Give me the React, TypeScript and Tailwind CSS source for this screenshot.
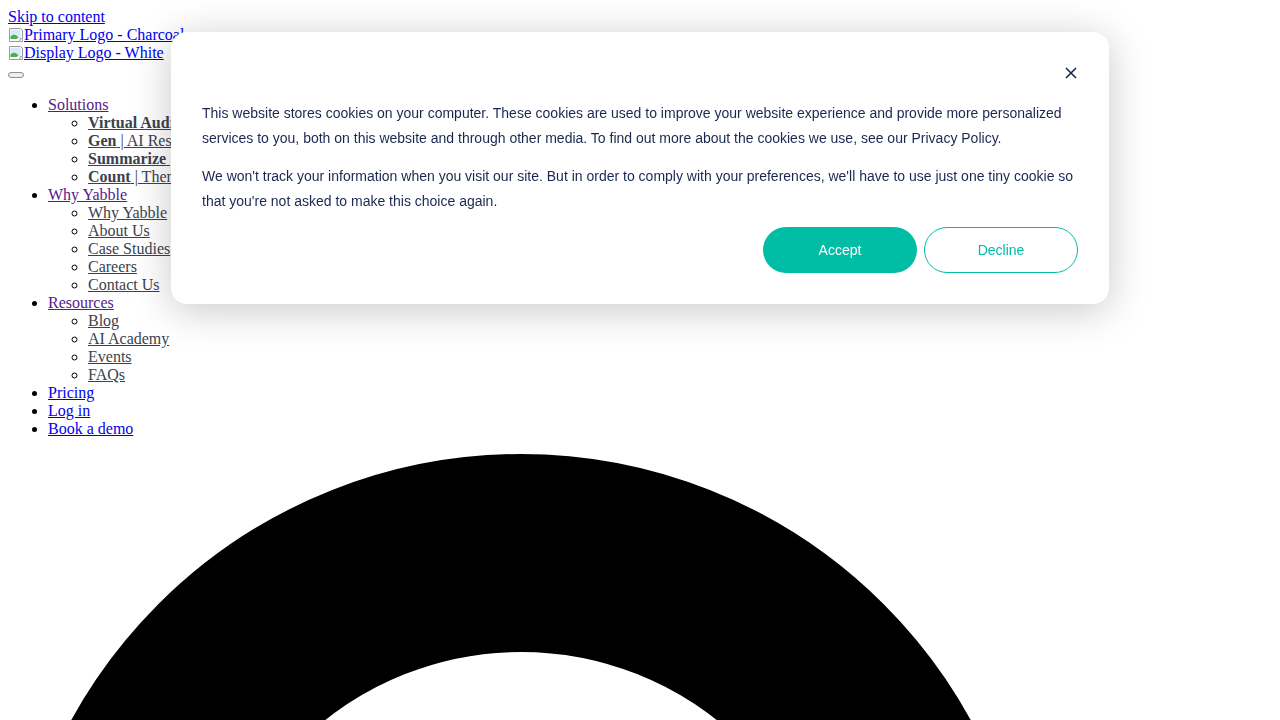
import React from "react";

type SubItem = { bold?: string; rest?: string };

interface NavGroup {
  label: string;
  visited?: boolean;
  items?: SubItem[];
}

const NAV: NavGroup[] = [
  {
    label: "Solutions",
    visited: true,
    items: [
      { bold: "Virtual Audiences", rest: " | AI Personas" },
      { bold: "Gen", rest: " | AI Research Assistant" },
      { bold: "Summarize", rest: " | Survey Insights" },
      { bold: "Count", rest: " | Thematic Analysis" },
    ],
  },
  {
    label: "Why Yabble",
    visited: true,
    items: [
      { rest: "Why Yabble" },
      { rest: "About Us" },
      { rest: "Case Studies" },
      { rest: "Careers" },
      { rest: "Contact Us" },
    ],
  },
  {
    label: "Resources",
    visited: true,
    items: [{ rest: "Blog" }, { rest: "AI Academy" }, { rest: "Events" }, { rest: "FAQs" }],
  },
  { label: "Pricing" },
  { label: "Log in" },
  { label: "Book a demo" },
];

// chrome's broken-image glyph, roughly
function BrokenImg() {
  return (
    <svg width="16" height="16" viewBox="0 0 16 16" className="inline-block align-[-3px]">
      <path d="M1.5 1.5h11l2 2v8l-3 3h-10z" fill="#fff" stroke="#9a9a9a" />
      <path d="M2.5 2.5h10v7l-2.5 2.5h-7.5z" fill="#d6ebf9" />
      <path d="M2.5 12V9.5c2-2 4-2.5 6.5-0.5l1.5 1.5-2 1.5z" fill="#4caf50" />
      <path d="M12.5 11l2 1.5v2h-3z" fill="#fff" stroke="#9a9a9a" />
    </svg>
  );
}

function CookieBanner() {
  return (
    <div className="fixed left-[171px] top-[32px] w-[938px] rounded-[16px] bg-white px-[31px] py-[31px] font-['Liberation_Sans',Arial,sans-serif] text-[#1a2850] shadow-[0_6px_40px_rgba(0,0,0,0.22)]">
      <div className="flex h-5 items-center justify-end">
        <button className="flex h-5 w-[14px] items-center justify-center" aria-label="Close">
          <svg width="12" height="12" viewBox="0 0 12 12" fill="none" stroke="#1a2850" strokeWidth="1.6">
            <path d="M1 1l10 10M11 1L1 11" />
          </svg>
        </button>
      </div>
      <div className="mt-[18px] text-[14px] leading-[25px]">
        <p>
          This website stores cookies on your computer. These cookies are used to improve your website experience and
          provide more personalized services to you, both on this website and through other media. To find out more about
          the cookies we use, see our Privacy Policy.
        </p>
        <p className="mt-[13px]">
          We won't track your information when you visit our site. But in order to comply with your preferences, we'll
          have to use just one tiny cookie so that you're not asked to make this choice again.
        </p>
      </div>
      <div className="mt-[13px] flex justify-end gap-[7px]">
        <button className="h-[46px] w-[154px] rounded-full bg-[#00bda5] text-[14px] text-white">Accept</button>
        <button className="h-[46px] w-[154px] rounded-full border border-[#00bda5] text-[14px] text-[#00bda5]">
          Decline
        </button>
      </div>
    </div>
  );
}

export default function App() {
  return (
    <div className="bg-white p-2 font-['Liberation_Serif','Times_New_Roman',serif] text-[16px] leading-[18px] text-black">
      <a href="#" className="text-[#0000ee] underline">
        Skip to content
      </a>
      <div>
        <a href="#" className="text-[#0000ee] underline">
          <BrokenImg />
          Primary Logo - Charcoal
        </a>
      </div>
      <div>
        <a href="#" className="text-[#0000ee] underline">
          <BrokenImg />
          Display Logo - White
        </a>
      </div>
      <div className="h-[18px]">
        <button className="inline-block h-[6px] w-4 rounded-[3px] border border-[#8f8f8f] bg-[#efefef] align-[-1px]" />
      </div>

      <ul className="my-4 list-disc pl-10">
        {NAV.map((g) => (
          <li key={g.label}>
            <a href="#" className={g.visited ? "text-[#551a8b] underline" : "text-[#0000ee] underline"}>
              {g.label}
            </a>
            {g.items && (
              <ul className="list-[circle] pl-10">
                {g.items.map((s, i) => (
                  <li key={i}>
                    <a href="#" className="text-[#3b4250] underline">
                      {s.bold && <strong className="font-bold">{s.bold}</strong>}
                      {s.rest}
                    </a>
                  </li>
                ))}
              </ul>
            )}
          </li>
        ))}
      </ul>

      <svg width="1026" height="1026" viewBox="0 0 1026 1026" className="block">
        <circle cx="513" cy="513" r="414" fill="none" stroke="#000" strokeWidth="198" />
      </svg>

      <CookieBanner />
    </div>
  );
}
